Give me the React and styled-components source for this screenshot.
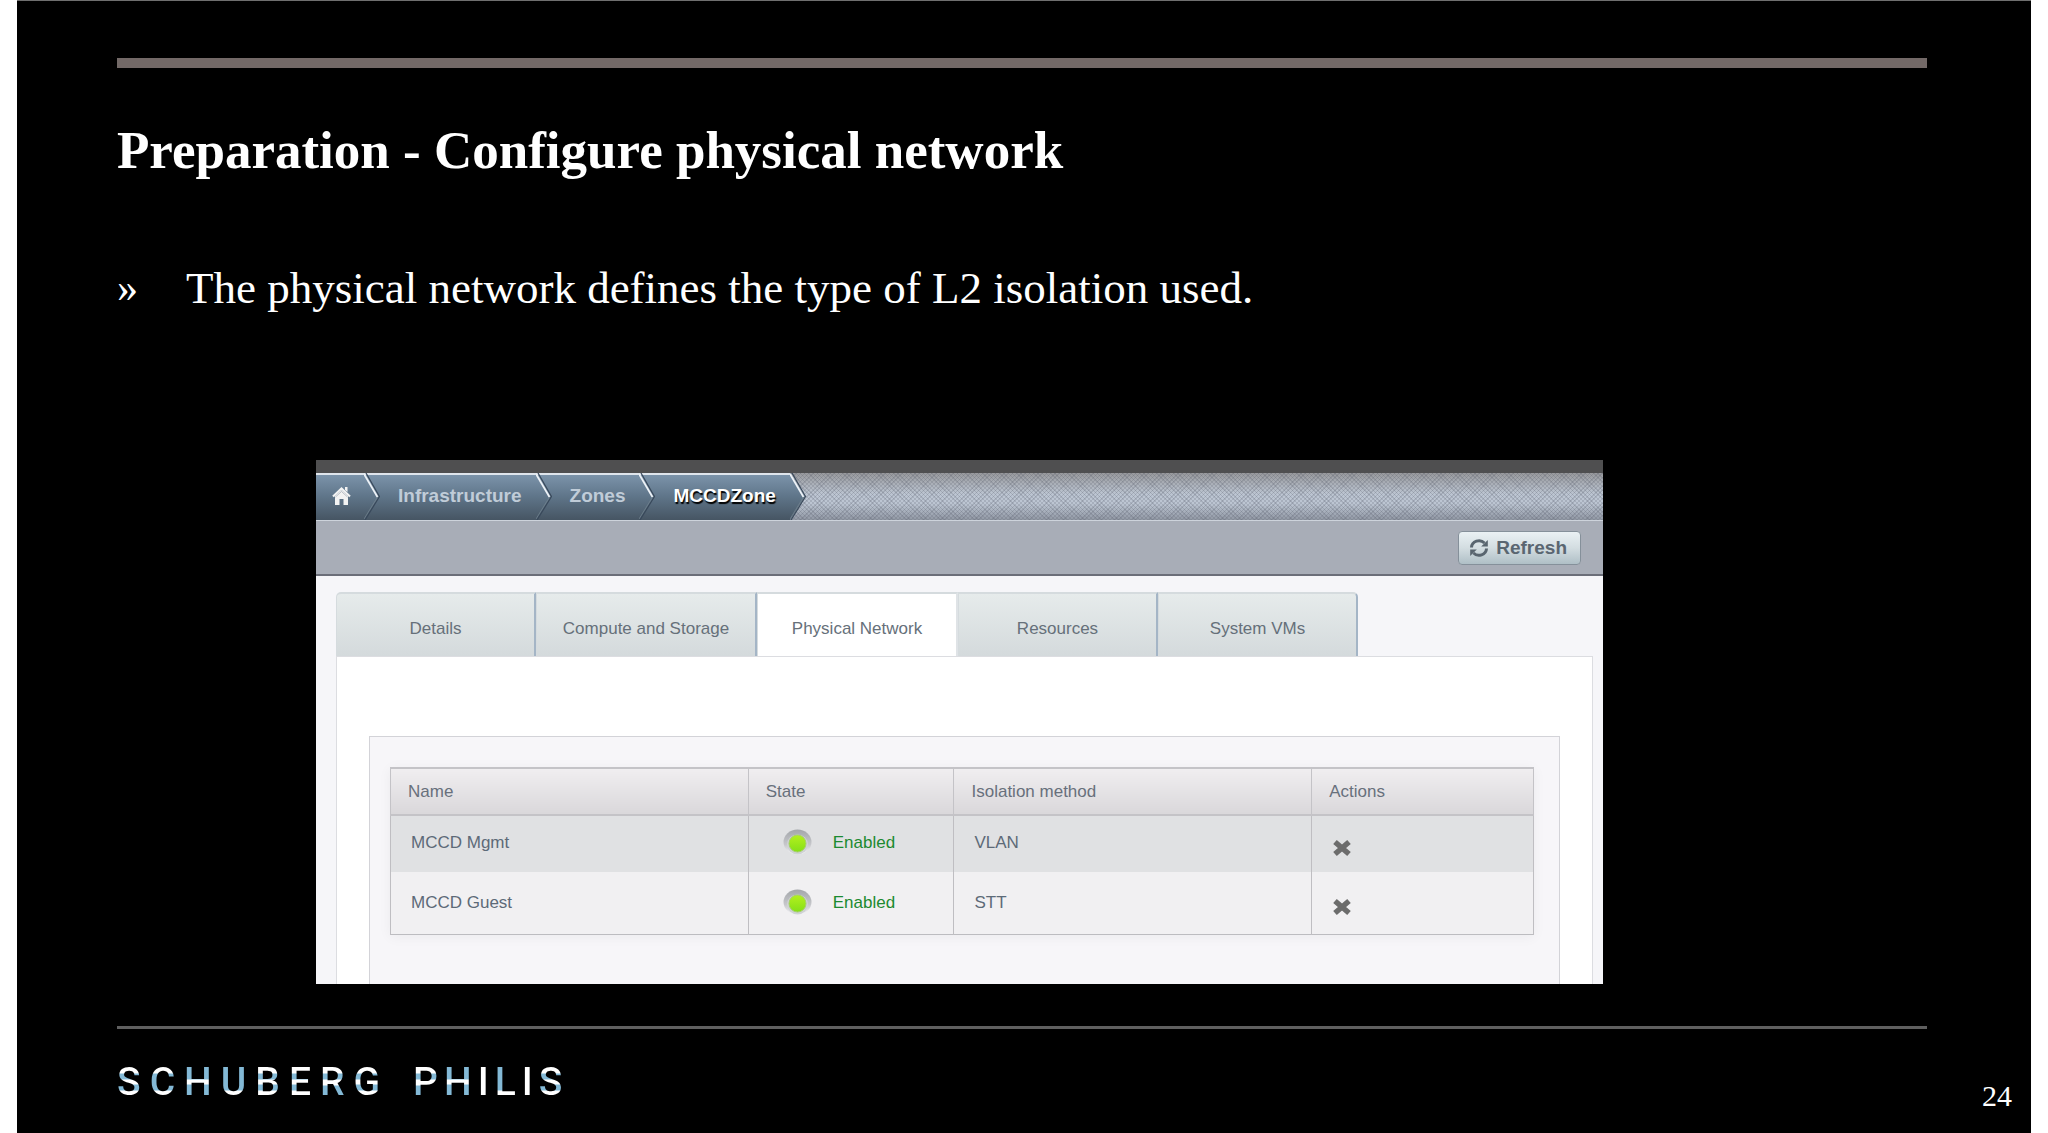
import React from 'react';
import styled, { createGlobalStyle, css } from 'styled-components';

const crumbs = ['Infrastructure', 'Zones', 'MCCDZone'];

const tabs = [
    { name: 'Details', width: 200 },
    { name: 'Compute and Storage', width: 221 },
    { name: 'Physical Network', width: 201, active: true },
    { name: 'Resources', width: 200 },
    { name: 'System VMs', width: 200 },
];

const networks = [
    { name: 'MCCD Mgmt', state: 'Enabled', isolation: 'VLAN' },
    { name: 'MCCD Guest', state: 'Enabled', isolation: 'STT' },
];

// each letter of the wordmark with the bars that are white in it
const wordmark = [
    {
        gap: 9,
        letters: [
            ['S', 'all'],
            ['C', 'ends'],
            ['H', 'middle'],
            ['U', 'bottom'],
            ['B', 'all'],
            ['E', 'all'],
            ['R', 'upper'],
            ['G', 'all'],
        ],
    },
    {
        gap: 6,
        letters: [
            ['P', 'upper'],
            ['H', 'middle'],
            ['I', 'solid'],
            ['L', 'bottom'],
            ['I', 'solid'],
            ['S', 'all'],
        ],
    },
];

const Chevron = ({ last }) => (
    <ChevronSvg viewBox='0 0 16 47' aria-hidden='true'>
        <defs>
            <linearGradient id='crumbFill' x1='0' y1='0' x2='0' y2='1'>
                <stop offset='0' stopColor='#7e96ad' />
                <stop offset='0.5' stopColor='#5f7589' />
                <stop offset='1' stopColor='#465563' />
            </linearGradient>
        </defs>
        <path
            d={last ? 'M0 0L15 23.500L0 47Z' : 'M0 0H16V47H0Z'}
            fill='url(#crumbFill)'
        />
        {!last && <path d='M0 1H16' stroke='#dfe5ec' strokeWidth='2' />}
        <path d='M2 0L15.500 23.500L1 47' fill='none' stroke='#38485a' strokeWidth='1.200' />
        <path d='M0 1L13.500 24' fill='none' stroke='#edf2f7' strokeWidth='1.800' />
        <path d='M13.500 24L0 46' fill='none' stroke='#71838f' strokeWidth='0.800' />
    </ChevronSvg>
);

const HomeIcon = () => (
    <svg width='19' height='20' viewBox='0 0 19 20' aria-hidden='true'>
        <path d='M3 10V19H7.500V13H11.500V19H16V10L9.500 4Z' fill='#f3f3f3' />
        <path d='M13 1H15.500V6L13 4Z' fill='#f3f3f3' />
        <path d='M1 10.500L9.500 2.500L18 10.500' fill='none' stroke='#f3f3f3' strokeWidth='2.200' />
        <path d='M3.500 11L9.500 5.500L15.500 11' fill='none' stroke='#a0a8b0' strokeWidth='0.700' />
    </svg>
);

const RefreshIcon = () => (
    <svg width='20' height='20' viewBox='0 0 20 20' aria-hidden='true'>
        <path d='M2.500 9.500A7.500 7 0 0 1 15.500 5' fill='none' stroke='#59656f' strokeWidth='3' />
        <path d='M17.500 10.500A7.500 7 0 0 1 4.500 15' fill='none' stroke='#59656f' strokeWidth='3' />
        <path d='M18.800 2V8.500H12.200Z' fill='#59656f' />
        <path d='M1.200 18V11.500H7.800Z' fill='#59656f' />
    </svg>
);

const StateLed = () => (
    <svg width='30' height='28' viewBox='0 0 30 28' aria-hidden='true'>
        <defs>
            <linearGradient id='ring' x1='0' y1='0' x2='0' y2='1'>
                <stop offset='0' stopColor='#a3a6aa' />
                <stop offset='0.600' stopColor='#c6c7cb' />
                <stop offset='1' stopColor='#f4f4f6' />
            </linearGradient>
            <linearGradient id='led' x1='0' y1='0' x2='0' y2='1'>
                <stop offset='0' stopColor='#b4f01e' />
                <stop offset='1' stopColor='#85df18' />
            </linearGradient>
        </defs>
        <ellipse cx='14.500' cy='13' rx='14' ry='12.500' fill='url(#ring)' />
        <ellipse cx='14.500' cy='15.500' rx='10.500' ry='10' fill='#d0d2d5' />
        <ellipse cx='14.500' cy='14.500' rx='8.500' ry='8.500' fill='url(#led)' stroke='#a5cf6a' />
    </svg>
);

const CrossIcon = () => (
    <svg width='20' height='18' viewBox='0 0 20 18' aria-hidden='true'>
        <path d='M3 3L17 15M17 3L3 15' stroke='#6c6c6c' strokeWidth='5.500' />
    </svg>
);

const Console = () => (
    <ConsoleFrame>
        <TopStrip />
        <Breadcrumb aria-label='Breadcrumb'>
            <Crumb>
                <HomeLink href='#home' aria-label='Home'>
                    <HomeIcon />
                </HomeLink>
                <Chevron />
            </Crumb>
            {crumbs.map((crumb, index) => {
                const last = index === crumbs.length - 1;
                return (
                    <Crumb key={crumb}>
                        <CrumbLink href={`#${crumb}`} $current={last}>
                            {crumb}
                        </CrumbLink>
                        <Chevron last={last} />
                    </Crumb>
                );
            })}
        </Breadcrumb>
        <Toolbar>
            <RefreshButton type='button'>
                <RefreshIcon />
                Refresh
            </RefreshButton>
        </Toolbar>
        <ConsoleBody>
            <TabList>
                {tabs.map((tab) => (
                    <Tab key={tab.name} type='button' $width={tab.width} $active={tab.active}>
                        {tab.name}
                    </Tab>
                ))}
            </TabList>
            <TabPanel>
                <ListBox>
                    <NetworkTable>
                        <thead>
                            <tr>
                                <HeadCell $width='31.300%'>Name</HeadCell>
                                <HeadCell $width='18%'>State</HeadCell>
                                <HeadCell $width='31.300%'>Isolation method</HeadCell>
                                <HeadCell>Actions</HeadCell>
                            </tr>
                        </thead>
                        <tbody>
                            {networks.map((network) => (
                                <NetworkRow key={network.name}>
                                    <Cell>{network.name}</Cell>
                                    <Cell>
                                        <State>
                                            <StateLed />
                                            {network.state}
                                        </State>
                                    </Cell>
                                    <Cell>{network.isolation}</Cell>
                                    <Cell>
                                        <RemoveButton type='button' aria-label='Remove'>
                                            <CrossIcon />
                                        </RemoveButton>
                                    </Cell>
                                </NetworkRow>
                            ))}
                        </tbody>
                    </NetworkTable>
                </ListBox>
            </TabPanel>
        </ConsoleBody>
    </ConsoleFrame>
);

const App = () => {
    return (
        <>
            <GlobalStyle />
            <Slide>
                <Content>
                    <TopRule />
                    <Title>Preparation - Configure physical network</Title>
                    <Bullets>
                        <Bullet>
                            <Marker>»</Marker>
                            <span>The physical network defines the type of L2 isolation used.</span>
                        </Bullet>
                    </Bullets>
                    <Console />
                </Content>
                <Footer>
                    <Wordmark>
                        {wordmark.map((word, index) => (
                            <Word key={index} $gap={word.gap}>
                                {word.letters.map(([letter, tone], i) => (
                                    <Letter key={i} $tone={tone}>
                                        {letter}
                                    </Letter>
                                ))}
                            </Word>
                        ))}
                    </Wordmark>
                    <PageNumber>24</PageNumber>
                </Footer>
            </Slide>
        </>
    );
};

export default App;

const GlobalStyle = createGlobalStyle`
    * {
        box-sizing: border-box;
    }

    body {
        margin: 0;
        background-color: #fff;
    }
`;

const Slide = styled.main`
    display: flex;
    flex-direction: column;
    min-height: 100vh;
    margin: 0 17px;
    border-top: 1px solid #6f6f6f;
    background-color: #000;
    color: #fff;
    font-family: 'Liberation Serif', serif;
`;

const Content = styled.div`
    flex: 1;
    padding: 57px 104px 0 100px;
`;

const TopRule = styled.div`
    height: 10px;
    background-color: #736967;
`;

const Title = styled.h1`
    margin: 50px 0 0;
    font-size: 53px;
    line-height: 64px;
    font-weight: bold;
`;

const Bullets = styled.ul`
    margin: 78px 0 0;
    padding: 0;
    list-style: none;
`;

const Bullet = styled.li`
    display: flex;
    font-size: 45px;
    line-height: 56px;
`;

const Marker = styled.span`
    width: 69px;
    font-size: 42px;
`;

const ConsoleFrame = styled.section`
    margin: 144px 324px 0 199px;
    background-color: #f6f6f9;
    color: #5d6a78;
    font-family: 'Liberation Sans', Arial, sans-serif;
    font-size: 17px;
    line-height: 22px;
`;

const TopStrip = styled.div`
    height: 13px;
    background-color: #4f4f50;
`;

const Breadcrumb = styled.nav`
    display: flex;
    height: 47px;
    background-image:
        repeating-linear-gradient(45deg, rgba(80, 85, 100, 0.2) 0 1px, transparent 1px 3px),
        repeating-linear-gradient(-45deg, rgba(80, 85, 100, 0.2) 0 1px, transparent 1px 3px),
        linear-gradient(#98999c, #bcc5d2 45%, #bcc5d2 65%, #9097a3);
`;

const Crumb = styled.div`
    display: flex;
`;

const crumbLabel = css`
    display: flex;
    align-items: center;
    padding-bottom: 2px;
    background-image: linear-gradient(#7e96ad, #5f7589 50%, #465563);
    box-shadow: inset 0 2px #dfe5ec;
`;

const HomeLink = styled.a`
    ${crumbLabel}
    padding-left: 16px;
    padding-right: 13px;
`;

const CrumbLink = styled.a`
    ${crumbLabel}
    padding-left: 18px;
    padding-right: 14px;
    color: ${({ $current }) => ($current ? '#fff' : '#c0ccd8')};
    font-size: 19px;
    font-weight: bold;
    text-decoration: none;
    text-shadow: ${({ $current }) => ($current ? '1px 2px 1px #000' : 'none')};
`;

const ChevronSvg = styled.svg`
    width: 16px;
    height: 47px;
`;

const Toolbar = styled.div`
    display: flex;
    justify-content: flex-end;
    align-items: center;
    height: 56px;
    padding: 0 22px 0 0;
    border-top: 1px solid #cdd3db;
    border-bottom: 2px solid #6b6e79;
    background-color: #a8adb7;
`;

const RefreshButton = styled.button`
    display: flex;
    align-items: center;
    gap: 7px;
    height: 34px;
    padding: 0 13px 0 10px;
    border: 1px solid #85909a;
    border-radius: 4px;
    background-image: linear-gradient(#eaf1f4, #d3dde1 50%, #afbfc6);
    color: #5a6671;
    font: bold 19px 'Liberation Sans', Arial, sans-serif;
`;

const ConsoleBody = styled.div`
    padding: 16px 10px 0 20px;
`;

const TabList = styled.div`
    display: flex;
`;

const Tab = styled.button`
    width: ${({ $width }) => $width}px;
    height: 64px;
    padding: 7px 0 0;
    border: solid #d5dbde;
    border-width: 2px 0 0 1px;
    border-right: ${({ $active }) => ($active ? '2px solid #dfe3e6' : '2px solid #a4b5c6')};
    background: ${({ $active }) => ($active ? '#fff' : 'linear-gradient(#e6ebeb, #d4dadc)')};
    color: #66707a;
    font: 17px 'Liberation Sans', Arial, sans-serif;

    &:first-child {
        border-top-left-radius: 5px;
    }

    &:last-child {
        border-top-right-radius: 5px;
    }
`;

const TabPanel = styled.div`
    padding: 79px 32px 0;
    border: solid #dcdde1;
    border-width: 1px 1px 0;
    background-color: #fff;
`;

const ListBox = styled.div`
    padding: 30px 25px 49px 20px;
    border: solid #d3d3d8;
    border-width: 1px 1px 0;
    background-color: #f7f6f9;
`;

const NetworkTable = styled.table`
    width: 100%;
    border-collapse: collapse;
    table-layout: fixed;
    border: 1px solid #bcbcc0;
    border-top-width: 2px;
    box-shadow: 0 2px 12px rgba(0, 0, 0, 0.05);
`;

const HeadCell = styled.th`
    width: ${({ $width }) => $width || 'auto'};
    height: 47px;
    padding: 0 0 0 17px;
    border: solid #c4c3c7;
    border-width: 2px 1px;
    background-image: linear-gradient(#f0eef0, #d9d7da);
    color: #68707c;
    font-weight: normal;
    text-align: left;
`;

const Cell = styled.td`
    padding: 0 0 0 20px;
    border: solid #bfbec2;
    border-width: 0 1px;
`;

const NetworkRow = styled.tr`
    height: 62px;
    background-color: #f1f0f2;

    &:first-child {
        height: 57px;
        background-color: #e0e1e3;
    }

    &:first-child ${Cell} {
        padding-bottom: 2px;
    }
`;

const State = styled.div`
    display: flex;
    align-items: center;
    gap: 20px;
    padding-left: 14px;
    color: #1c8a30;
`;

const RemoveButton = styled.button`
    display: block;
    margin-top: 9px;
    padding: 0;
    border: 0;
    background: none;
    line-height: 0;
`;

const Footer = styled.footer`
    display: flex;
    justify-content: space-between;
    align-items: flex-start;
    height: 107px;
    margin: 0 19px 0 100px;
    background: linear-gradient(#5f5f5f, #5f5f5f) 0 0 / calc(100% - 85px) 3px no-repeat;
`;

const Wordmark = styled.div`
    display: flex;
    gap: 33px;
    padding-top: 33px;
    font-family: Roboto, sans-serif;
    font-size: 39px;
    line-height: 46px;
    font-weight: 500;
`;

const Word = styled.div`
    display: flex;
    gap: ${({ $gap }) => $gap}px;
`;

// the cap height runs from 9px to 37px of the line
const bars = {
    all: '#fff 14px, #83b9d6 15px 20px, #fff 21px 25px, #83b9d6 26px 31px, #fff 32px',
    ends: '#fff 14px, #83b9d6 15px 31px, #fff 32px',
    upper: '#fff 14px, #83b9d6 15px 20px, #fff 21px 26px, #83b9d6 27px',
    middle: '#83b9d6 20px, #fff 21px 25px, #83b9d6 26px',
    bottom: '#83b9d6 31px, #fff 32px',
    solid: '#fff, #fff',
};

const Letter = styled.span`
    background-image: linear-gradient(${({ $tone }) => bars[$tone]});
    background-clip: text;
    -webkit-text-fill-color: transparent;
`;

const PageNumber = styled.span`
    padding-top: 52px;
    font-size: 30px;
    line-height: 36px;
`;
